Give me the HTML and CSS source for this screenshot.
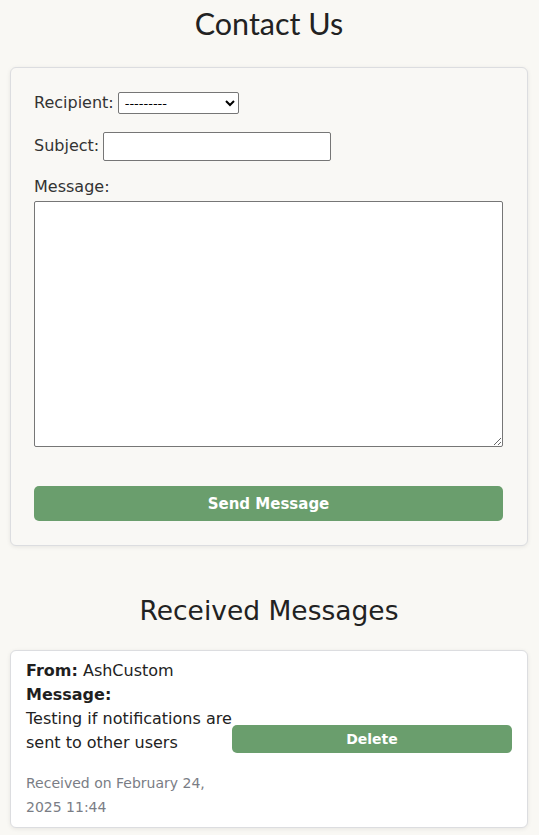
FILE: index.html
```html
<!DOCTYPE html>
<html lang="en">
<head>
<meta charset="utf-8">
<title>Contact Us</title>
<link rel="stylesheet" href="styles.css">
</head>
<body>
<main class="page">
  <h1 class="title">Contact Us</h1>
  <form class="card contact-form">
    <div class="field inline">
      <label for="recipient">Recipient:</label>
      <select id="recipient" class="select"><option>---------</option></select>
    </div>
    <div class="field inline">
      <label for="subject">Subject:</label>
      <input id="subject" class="text-input" type="text">
    </div>
    <div class="field">
      <label for="message">Message:</label>
      <textarea id="message" class="textarea"></textarea>
    </div>
    <button type="button" class="btn btn-send">Send Message</button>
  </form>

  <h2 class="subtitle">Received Messages</h2>
  <div class="msg-card">
    <div class="msg-body">
      <div class="line"><strong>From:</strong> AshCustom</div>
      <div class="line"><strong>Message:</strong></div>
      <div class="line">Testing if notifications are sent to other users</div>
      <div class="meta">Received on February 24, 2025 11:44</div>
    </div>
    <button type="button" class="btn btn-delete">Delete</button>
  </div>
</main>
</body>
</html>
```

FILE: styles.css
```css
* { box-sizing: border-box; }
html, body { margin: 0; padding: 0; }
body {
  background: #f9f8f4;
  color: #222;
  font-family: "DejaVu Sans", sans-serif;
  font-size: 16px;
}
.page {
  padding: 0 11px 8px 10px;
}
.title {
  font-family: Lato, sans-serif;
  font-weight: 400;
  font-size: 30.5px;
  text-align: center;
  margin: 0;
  padding: 4px 0 0;
  height: 67px;
  line-height: 38px;
  color: #222;
}
.card {
  background: #f9f8f5;
  border: 1px solid #dcdde0;
  border-radius: 6px;
  box-shadow: 0 1px 4px rgba(0,0,0,0.08);
}
.contact-form {
  padding: 23px 23px 24px 23px;
  display: flex;
  flex-direction: column;
}
.field {
  display: flex;
  flex-direction: column;
  color: #333;
  font-size: 16px;
}
.field.inline {
  flex-direction: row;
  align-items: center;
  gap: 4px;
  margin-bottom: 16px;
  height: 24px;
}
.field.inline + .field.inline { height: 30px; margin-bottom: 14px; }
.field label { line-height: 24px; }
.select {
  width: 121px;
  height: 22px;
  font-size: 13px;
  font-family: "DejaVu Sans", sans-serif;
  border: 1px solid #767676;
  border-radius: 2px;
  background: #fff;
  padding: 0 2px;
}
.text-input {
  width: 228px;
  height: 29px;
  border: 1px solid #767676;
  border-radius: 2px;
  background: #fff;
}
.textarea {
  width: 469px;
  height: 246px;
  border: 1px solid #767676;
  border-radius: 2px;
  background: #fff;
  margin-top: 2px;
}
.btn {
  border: 0;
  border-radius: 5px;
  background: #6a9e6d;
  color: #fff;
  font-family: "DejaVu Sans", sans-serif;
  font-weight: 700;
  cursor: pointer;
}
.btn-send {
  margin-top: 39px;
  height: 35px;
  font-size: 15px;
  width: 469px;
}
.subtitle {
  font-weight: 400;
  font-size: 26.5px;
  text-align: center;
  margin: 50px 0 24px;
  line-height: 30px;
  color: #222;
}
.msg-card {
  background: #fff;
  border: 1px solid #dcdde0;
  border-radius: 6px;
  box-shadow: 0 1px 4px rgba(0,0,0,0.08);
  padding: 6px 15px 8px 15px;
  display: flex;
  align-items: center;
}
.msg-body {
  width: 206px;
  flex: none;
  line-height: 24px;
  font-size: 16px;
  padding-top: 2px;
}
.msg-body strong { color: #1f1f1f; }
.meta {
  margin-top: 16px;
  color: #7a7d85;
  font-size: 14px;
  line-height: 24px;
}
.btn-delete {
  flex: 1;
  height: 28px;
  font-size: 14px;
  margin-top: 2px;
}
```
